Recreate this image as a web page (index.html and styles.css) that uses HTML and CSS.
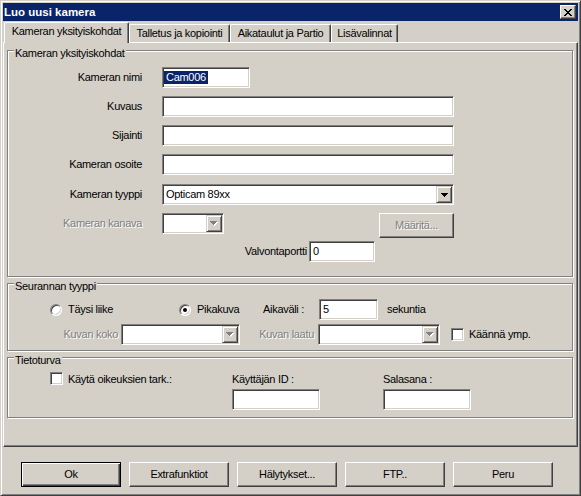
FILE: index.html
```html
<!DOCTYPE html>
<html lang="fi">
<head>
<meta charset="utf-8">
<title>Luo uusi kamera</title>
<link rel="stylesheet" href="styles.css">
</head>
<body>
<div class="window">
  <div class="titlebar">
    <span class="title">Luo uusi kamera</span>
    <span class="close-btn">
      <svg class="icon-x" width="8" height="7" viewBox="0 0 8 7" shape-rendering="crispEdges"><path d="M0 0h2v1h-2zM6 0h2v1h-2zM1 1h2v1h-2zM5 1h2v1h-2zM2 2h4v1h-4zM3 3h2v1h-2zM2 4h4v1h-4zM1 5h2v1h-2zM5 5h2v1h-2zM0 6h2v1h-2zM6 6h2v1h-2z" fill="#000"/></svg>
    </span>
  </div>

  <div class="tabs">
    <div class="tab tab-active">Kameran yksityiskohdat</div>
    <div class="tab tab-2">Talletus ja kopiointi</div>
    <div class="tab tab-3">Aikataulut ja Partio</div>
    <div class="tab tab-4">Lisävalinnat</div>
  </div>

  <div class="panel">
    <div class="group group-camera">
      <div class="legend">Kameran yksityiskohdat</div>

      <div class="form-row row-first">
        <span class="lbl">Kameran nimi</span>
        <div class="edit w-name"><span class="val sel">Cam006</span></div>
      </div>
      <div class="form-row">
        <span class="lbl">Kuvaus</span>
        <div class="edit w-wide"></div>
      </div>
      <div class="form-row">
        <span class="lbl">Sijainti</span>
        <div class="edit w-wide"></div>
      </div>
      <div class="form-row">
        <span class="lbl">Kameran osoite</span>
        <div class="edit w-wide"></div>
      </div>
      <div class="form-row row-gap9">
        <span class="lbl">Kameran tyyppi</span>
        <div class="combo w-wide">
          <span class="combo-text">Opticam 89xx</span>
          <span class="combo-btn">
            <svg width="7" height="4" viewBox="0 0 7 4" shape-rendering="crispEdges"><path d="M0 0h7v1h-7zM1 1h5v1h-5zM2 2h3v1h-3zM3 3h1v1h-1z" fill="#000"/></svg>
          </span>
        </div>
      </div>
      <div class="form-row row-channel">
        <span class="lbl disabled">Kameran kanava</span>
        <div class="ctrl-wrap">
          <div class="combo w-channel">
            <span class="combo-text"></span>
            <span class="combo-btn">
              <svg width="8" height="5" viewBox="0 0 8 5" shape-rendering="crispEdges"><path d="M1 1h7v1h-7zM2 2h5v1h-5zM3 3h3v1h-3zM4 4h1v1h-1z" fill="#fff"/><path d="M0 0h7v1h-7zM1 1h5v1h-5zM2 2h3v1h-3zM3 3h1v1h-1z" fill="#808080"/></svg>
            </span>
          </div>
          <div class="btn btn-define"><span class="disabled">Määritä...</span></div>
        </div>
      </div>
      <div class="form-row row-port">
        <span class="port-lbl">Valvontaportti</span>
        <div class="edit w-port"><span class="val">0</span></div>
      </div>
    </div>

    <div class="group group-track">
      <div class="legend">Seurannan tyyppi</div>
      <div class="track-row">
        <div class="opt opt-full"><span class="radio"></span><span>Täysi liike</span></div>
        <div class="opt opt-snap"><span class="radio on"></span><span>Pikakuva</span></div>
        <span class="interval-lbl">Aikaväli :</span>
        <div class="edit w-interval"><span class="val">5</span></div>
        <span class="unit">sekuntia</span>
      </div>
      <div class="track-row2">
        <span class="size-lbl disabled">Kuvan koko</span>
        <div class="combo w-size">
          <span class="combo-text"></span>
          <span class="combo-btn">
            <svg width="8" height="5" viewBox="0 0 8 5" shape-rendering="crispEdges"><path d="M1 1h7v1h-7zM2 2h5v1h-5zM3 3h3v1h-3zM4 4h1v1h-1z" fill="#fff"/><path d="M0 0h7v1h-7zM1 1h5v1h-5zM2 2h3v1h-3zM3 3h1v1h-1z" fill="#808080"/></svg>
          </span>
        </div>
        <span class="quality-lbl disabled">Kuvan laatu</span>
        <div class="combo w-quality">
          <span class="combo-text"></span>
          <span class="combo-btn">
            <svg width="8" height="5" viewBox="0 0 8 5" shape-rendering="crispEdges"><path d="M1 1h7v1h-7zM2 2h5v1h-5zM3 3h3v1h-3zM4 4h1v1h-1z" fill="#fff"/><path d="M0 0h7v1h-7zM1 1h5v1h-5zM2 2h3v1h-3zM3 3h1v1h-1z" fill="#808080"/></svg>
          </span>
        </div>
        <span class="check check-rotate"></span>
        <span class="check-text">Käännä ymp.</span>
      </div>
    </div>

    <div class="group group-security">
      <div class="legend">Tietoturva</div>
      <div class="sec-row">
        <div class="sec-col-a"><span class="check"></span><span class="check-label">Käytä oikeuksien tark.:</span></div>
        <div class="sec-col-b">
          <span class="field-lbl">Käyttäjän ID :</span>
          <div class="edit w-cred"></div>
        </div>
        <div class="sec-col-c">
          <span class="field-lbl">Salasana :</span>
          <div class="edit w-cred"></div>
        </div>
      </div>
    </div>
  </div>

  <div class="buttons">
    <div class="btn btn-default">Ok</div>
    <div class="btn">Extrafunktiot</div>
    <div class="btn">Hälytykset...</div>
    <div class="btn">FTP..</div>
    <div class="btn">Peru</div>
  </div>
</div>
</body>
</html>
```

FILE: styles.css
```css
* { box-sizing: border-box; }

html, body {
  margin: 0;
  padding: 0;
}

body {
  width: 581px;
  height: 496px;
  overflow: hidden;
  background: #D4D0C8;
  font-family: "Liberation Sans", Arial, sans-serif;
  font-size: 11px;
  letter-spacing: -0.3px;
  line-height: 13px;
  color: #000;
}

.window {
  width: 581px;
  height: 496px;
  background: #D4D0C8;
  border: 1px solid;
  border-color: #D4D0C8 #404040 #404040 #D4D0C8;
  box-shadow: inset 1px 1px #fff, inset -1px -1px #808080;
  padding: 2px;
  display: flex;
  flex-direction: column;
}

/* Title bar */
.titlebar {
  height: 18px;
  flex-shrink: 0;
  background: #0A246A;
  display: flex;
  align-items: flex-start;
  justify-content: space-between;
}

.title {
  color: #fff;
  font-weight: bold;
  font-size: 11.5px;
  letter-spacing: 0;
  line-height: 18px;
  padding-left: 1px;
}

.close-btn {
  width: 16px;
  height: 14px;
  margin: 2px 2px 0 0;
  background: #D4D0C8;
  border: 1px solid;
  border-color: #fff #404040 #404040 #fff;
  box-shadow: inset -1px -1px #808080;
  display: flex;
  align-items: center;
  justify-content: center;
  padding-top: 1px;
}

.icon-x { display: block; }

/* Tabs */
.tabs {
  height: 21px;
  flex-shrink: 0;
  display: flex;
  align-items: flex-end;
  padding-left: 1px;
  position: relative;
  z-index: 1;
}

.tab {
  height: 18px;
  border: 1px solid;
  border-bottom: 0;
  border-color: #fff #404040 #404040 #fff;
  border-top-left-radius: 2px;
  border-top-right-radius: 2px;
  box-shadow: inset -1px 0 #808080;
  background: #D4D0C8;
  text-align: center;
  padding-top: 2px;
  white-space: nowrap;
}

.tab-active {
  height: 21px;
  margin-bottom: -1px;
  width: 125px;
}

.tab-2 { width: 101px; }
.tab-3 { width: 101px; }
.tab-4 { width: 67px; }

/* Panel */
.panel {
  height: 405px;
  flex-shrink: 0;
  border: 1px solid;
  border-color: #fff #404040 #404040 #fff;
  box-shadow: inset -1px -1px #808080;
  padding: 7px 4px 0 3px;
}

.group {
  border: 1px solid #808080;
  box-shadow: inset 1px 1px #fff, 1px 1px #fff;
}

.group + .group { margin-top: 6px; }

.group-camera { height: 227px; }
.group-track { height: 68px; }
.group-security { height: 61px; }

.legend {
  width: max-content;
  height: 13px;
  margin: -4px 0 0 6px;
  padding: 0 1px;
  background: #D4D0C8;
}

.disabled {
  color: #808080;
  text-shadow: 1px 1px 0 #fff;
}

/* Camera rows */
.form-row {
  display: flex;
  align-items: center;
  height: 21px;
  margin-top: 8px;
}

.row-first { margin-top: 7px; }
.row-gap9 { margin-top: 9px; }

.lbl {
  width: 134px;
  margin-right: 20px;
  text-align: right;
  white-space: nowrap;
}

.row-channel {
  height: 25px;
  align-items: flex-start;
}

.row-channel .lbl { line-height: 21px; }

.ctrl-wrap {
  width: 292px;
  display: flex;
  justify-content: space-between;
  align-items: flex-start;
}

.row-port {
  margin-top: 3px;
  padding-left: 200px;
}

.port-lbl {
  width: 99px;
  margin-right: 2px;
  text-align: right;
}

/* Controls */
.edit {
  height: 21px;
  background: #fff;
  border: 1px solid;
  border-color: #808080 #fff #fff #808080;
  box-shadow: inset 1px 1px #404040, inset -1px -1px #D4D0C8;
  padding-left: 1px;
  display: flex;
  align-items: center;
  white-space: nowrap;
  overflow: hidden;
}

.val {
  padding: 0 2px;
  line-height: 13px;
}

.sel {
  background: #0A246A;
  color: #fff;
}

.w-name { width: 88px; }
.w-wide { width: 292px; }
.w-port { width: 66px; }
.w-interval { width: 59px; }
.w-channel { width: 62px; }
.w-size { width: 119px; }
.w-quality { width: 122px; }
.w-cred { width: 88px; }

.combo {
  height: 21px;
  background: #fff;
  border: 1px solid;
  border-color: #808080 #fff #fff #808080;
  box-shadow: inset 1px 1px #404040, inset -1px -1px #D4D0C8;
  padding: 1px;
  display: flex;
}

.combo-text {
  flex: 1;
  padding-left: 2px;
  line-height: 17px;
  white-space: nowrap;
}

.combo-btn {
  width: 16px;
  height: 17px;
  flex-shrink: 0;
  background: #D4D0C8;
  border: 1px solid;
  border-color: #D4D0C8 #404040 #404040 #D4D0C8;
  box-shadow: inset 1px 1px #fff, inset -1px -1px #808080;
  display: flex;
  align-items: center;
  justify-content: center;
}

.combo-btn svg { display: block; }

.btn {
  width: 100px;
  height: 25px;
  background: #D4D0C8;
  border: 1px solid;
  border-color: #fff #404040 #404040 #fff;
  box-shadow: inset -1px -1px #808080;
  display: flex;
  align-items: center;
  justify-content: center;
  white-space: nowrap;
}

.btn-default {
  border-color: #000;
  box-shadow: inset 1px 1px #fff, inset -1px -1px #404040, inset -2px -2px #808080;
}

.btn-define { width: 75px; }

.radio {
  width: 12px;
  height: 12px;
  flex-shrink: 0;
  border-radius: 50%;
  background: #fff;
  border: 1px solid;
  border-color: #808080 #fff #fff #808080;
  box-shadow: inset 1px 1px #404040, inset -1px -1px #D4D0C8;
  display: flex;
  align-items: center;
  justify-content: center;
}

.radio.on::after {
  content: "";
  width: 4px;
  height: 4px;
  border-radius: 50%;
  background: #000;
}

.check {
  width: 13px;
  height: 13px;
  flex-shrink: 0;
  background: #fff;
  border: 1px solid;
  border-color: #808080 #fff #fff #808080;
  box-shadow: inset 1px 1px #404040, inset -1px -1px #D4D0C8;
}

/* Tracking group */
.track-row {
  display: flex;
  align-items: center;
  height: 21px;
  margin-top: 6px;
  padding-left: 42px;
  white-space: nowrap;
}

.opt {
  display: flex;
  align-items: center;
  gap: 6px;
}

.opt-full { width: 129px; }
.opt-snap { width: 84px; }

.interval-lbl { width: 56px; }

.unit { margin-left: 9px; }

.track-row2 {
  display: flex;
  align-items: center;
  height: 21px;
  margin-top: 4px;
  white-space: nowrap;
}

.size-lbl {
  width: 110px;
  margin-right: 3px;
  text-align: right;
}

.quality-lbl {
  width: 74px;
  margin-right: 4px;
  text-align: right;
}

.check-rotate { margin-left: 11px; }

.check-text { margin-left: 5px; }

/* Security group */
.sec-row {
  display: flex;
  align-items: flex-start;
  margin-top: 5px;
  padding-left: 42px;
  white-space: nowrap;
}

.sec-col-a {
  width: 182px;
  display: flex;
  align-items: flex-start;
}

.check-label {
  margin-left: 5px;
  margin-top: 1px;
}

.sec-col-b { width: 151px; padding-top: 1px; }
.sec-col-c { padding-top: 1px; }

.field-lbl { display: block; height: 13px; }

.sec-col-b .edit,
.sec-col-c .edit { margin-top: 3px; }

/* Bottom buttons */
.buttons {
  display: flex;
  gap: 8px;
  margin-top: 15px;
  padding-left: 18px;
  flex-shrink: 0;
}
```
